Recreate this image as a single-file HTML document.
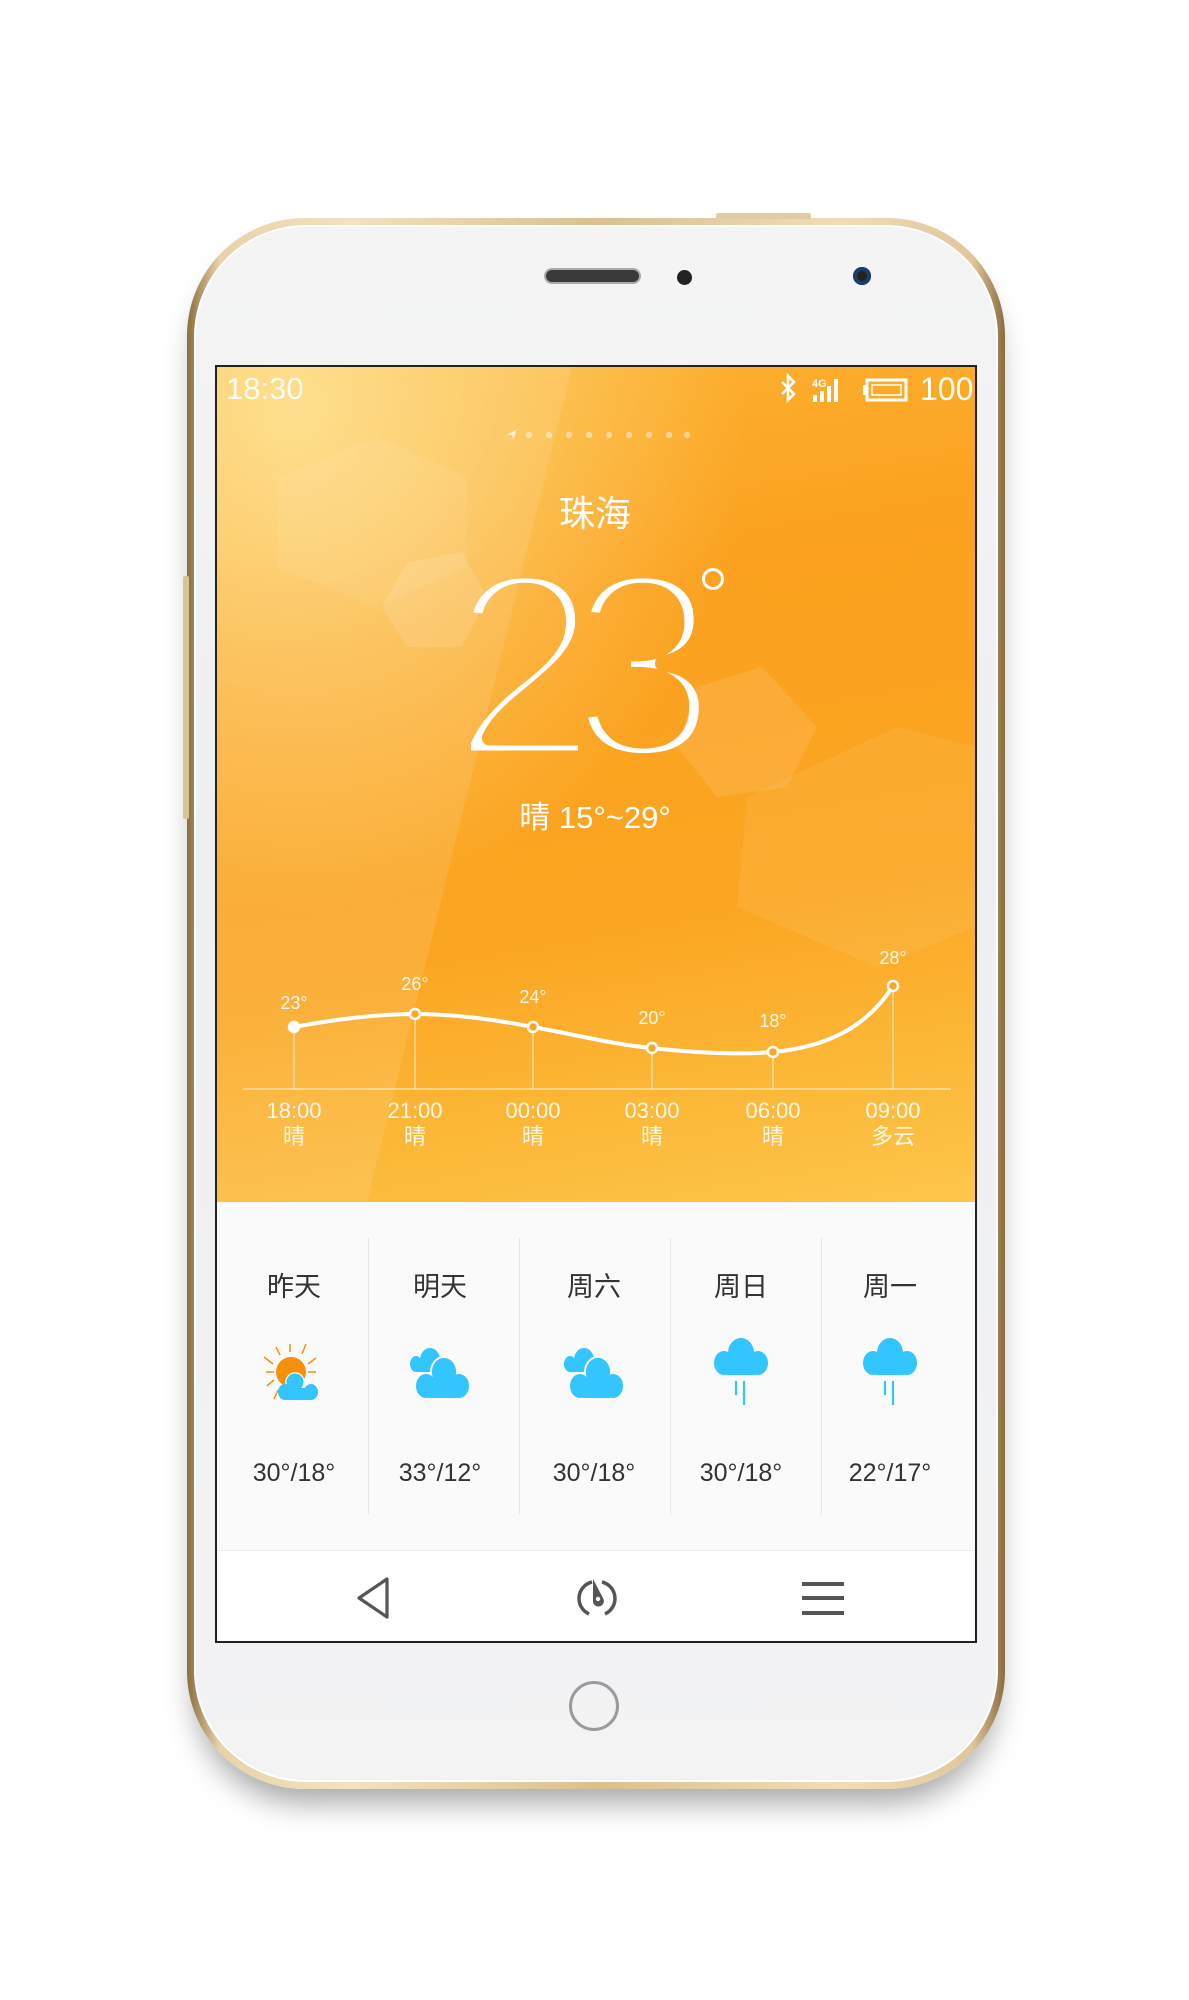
<!DOCTYPE html>
<html><head><meta charset="utf-8">
<style>
*{margin:0;padding:0;box-sizing:border-box}
body{width:1189px;height:2000px;background:#fff;position:relative;overflow:hidden;font-family:"Liberation Sans","Noto Sans CJK SC",sans-serif}
.abs{position:absolute}
.phone{left:187px;top:218px;width:818px;height:1571px;border-radius:118px;background:linear-gradient(90deg,#8a6d3e,#e8d3a8 4%,#f2e2c2 20%,#d9c08e 50%,#f0ddb8 80%,#e0c79a 96%,#8a6d3e);box-shadow:0 22px 30px -8px rgba(0,0,0,.35)}
.body{left:194px;top:225px;width:804px;height:1557px;border-radius:112px;background:linear-gradient(180deg,#f4f4f5,#eeeff1 40%,#f3f3f4);border:2px solid #fff}
.screen{left:215px;top:365px;width:762px;height:1278px;border:2px solid #222;background:#fafafa;overflow:hidden}
.orange{left:0;top:0;width:758px;height:835px;background:linear-gradient(170deg,#fcb232 0%,#fba11f 30%,#fba622 65%,#fdc64a 100%)}
.txt{color:#fff;position:absolute;white-space:nowrap}
.c{transform:translateX(-50%)}
.day{color:#333;font-size:27px}
.tmp{color:#333;font-size:25px}
.div{width:1px;background:#e6e6e6;top:871px;height:277px}
</style></head><body>
<div class="abs phone"></div>
<div class="abs body"></div>
<div class="abs" style="left:716px;top:213px;width:95px;height:6px;background:#e0cca0;border-radius:2px"></div>
<div class="abs" style="left:183px;top:576px;width:6px;height:243px;background:#d8c494;border-radius:2px"></div>
<div class="abs" style="left:544px;top:268px;width:97px;height:16px;border-radius:8px;background:#3a3a3a;border:2px solid #aaa"></div>
<div class="abs" style="left:677px;top:270px;width:15px;height:15px;border-radius:50%;background:#222"></div>
<div class="abs" style="left:853px;top:267px;width:18px;height:18px;border-radius:50%;background:#222;box-shadow:inset 0 0 0 4px #1a3d6a"></div>
<div class="abs" style="left:569px;top:1681px;width:50px;height:50px;border-radius:50%;border:3px solid #9a9a9a"></div>

<div class="abs screen">
 <div class="abs orange">
  <svg class="abs" style="left:0;top:0" width="758" height="835">
   <defs>
    <radialGradient id="g1" cx="0.1" cy="0.05" r="0.6"><stop offset="0" stop-color="#fee08a" stop-opacity=".9"/><stop offset="1" stop-color="#fee08a" stop-opacity="0"/></radialGradient>
    <mask id="m23" maskUnits="userSpaceOnUse" x="0" y="0" width="758" height="835">
     <rect width="758" height="835" fill="#000"/>
     <g font-family="Liberation Sans" font-size="268" fill="#fff" stroke="#000" stroke-width="15" stroke-linejoin="round">
      <text x="233" y="391">2</text><text x="352" y="391">3</text>
     </g>
    </mask>
   </defs>
   <rect width="758" height="835" fill="url(#g1)"/>
   <polygon points="0,0 355,0 150,835 0,835" fill="#fff" opacity=".1"/>
   <polygon points="60,110 160,70 250,110 250,200 160,240 60,200" fill="#fff" opacity=".07"/>
   <polygon points="190,195 245,185 270,230 245,280 190,280 165,240" fill="#fff" opacity=".12"/>
   <polygon points="480,320 545,300 600,360 570,420 500,430 460,380" fill="#fff" opacity=".1"/>
   <polygon points="530,430 680,360 758,380 758,560 660,600 520,540" fill="#fff" opacity=".07"/>
   <rect width="758" height="835" fill="#fff" mask="url(#m23)"/>
   <line x1="26" y1="722" x2="734" y2="722" stroke="#fff" stroke-opacity=".55" stroke-width="1.5"/>
   <g stroke="#fff" stroke-opacity=".55" stroke-width="1.5">
    <line x1="77" y1="660" x2="77" y2="722"/><line x1="198" y1="647" x2="198" y2="722"/><line x1="316" y1="660" x2="316" y2="722"/><line x1="435" y1="681" x2="435" y2="722"/><line x1="556" y1="685" x2="556" y2="722"/><line x1="676" y1="619" x2="676" y2="722"/>
   </g>
   <path d="M77 660 C120 652,160 647,198 647 C240 647,280 653,316 660 C360 668,400 678,435 681 C480 686,520 688,556 685 C610 680,650 660,676 619" fill="none" stroke="#fff" stroke-width="4"/>
   <g fill="#fba624" stroke="#fff" stroke-width="2.5">
    <circle cx="77" cy="660" r="5" fill="#fff"/><circle cx="198" cy="647" r="5"/><circle cx="316" cy="660" r="5"/><circle cx="435" cy="681" r="5"/><circle cx="556" cy="685" r="5"/><circle cx="676" cy="619" r="5"/>
   </g>
   <g fill="#fff" font-size="18" font-family="Liberation Sans" text-anchor="middle" opacity=".9">
    <text x="77" y="642">23°</text><text x="198" y="623">26°</text><text x="316" y="636">24°</text><text x="435" y="657">20°</text><text x="556" y="660">18°</text><text x="676" y="597">28°</text>
   </g>
  </svg>
  <div class="txt" style="left:9px;top:4px;font-size:31px;opacity:.92">18:30</div>
  <svg class="abs" style="left:560px;top:6px" width="140" height="36">
   <path d="M5 9 L17 21 L11 27 L11 3 L17 9 L5 21" fill="none" stroke="#fff" stroke-width="2.6"/>
   <text x="35" y="14" fill="#fff" font-size="11" font-weight="bold" font-family="Liberation Sans">4G</text>
   <g fill="#fff"><rect x="36" y="22" width="4" height="7"/><rect x="43" y="18" width="4" height="11"/><rect x="50" y="13" width="4" height="16"/><rect x="57" y="6" width="4" height="23"/></g>
   <rect x="90" y="7" width="39" height="20" fill="none" stroke="#fff" stroke-width="3"/><rect x="86" y="12" width="4" height="10" fill="#fff"/><rect x="95" y="12" width="29" height="10" fill="none" stroke="#fff" stroke-width="1.5"/>
  </svg>
  <div class="txt" style="left:703px;top:4px;font-size:32px">100</div>
  <svg class="abs" style="left:288px;top:60px" width="185" height="16">
   <path d="M2 8 L12 2 L8 13 L7 8Z" fill="#fff" opacity=".7"/>
   <g fill="#fff" opacity=".45"><circle cx="24" cy="8" r="3.2"/><circle cx="44" cy="8" r="3.2"/><circle cx="64" cy="8" r="3.2"/><circle cx="84" cy="8" r="3.2"/><circle cx="104" cy="8" r="3.2"/><circle cx="124" cy="8" r="3.2"/><circle cx="144" cy="8" r="3.2"/><circle cx="164" cy="8" r="3.2"/><circle cx="182" cy="8" r="3.2"/></g>
  </svg>
  <div class="txt c" style="left:378px;top:118px;font-size:36px">珠海</div>
  <div class="abs" style="left:485px;top:201px;width:22px;height:22px;border-radius:50%;border:3px solid #fff"></div>
  <div class="txt c" style="left:378px;top:425px;font-size:31px">晴 15°~29°</div>
  <div class="txt c" style="left:77px;top:731px;font-size:22px;text-align:center;line-height:26px;opacity:.9">18:00<br>晴</div>
  <div class="txt c" style="left:198px;top:731px;font-size:22px;text-align:center;line-height:26px;opacity:.9">21:00<br>晴</div>
  <div class="txt c" style="left:316px;top:731px;font-size:22px;text-align:center;line-height:26px;opacity:.9">00:00<br>晴</div>
  <div class="txt c" style="left:435px;top:731px;font-size:22px;text-align:center;line-height:26px;opacity:.9">03:00<br>晴</div>
  <div class="txt c" style="left:556px;top:731px;font-size:22px;text-align:center;line-height:26px;opacity:.9">06:00<br>晴</div>
  <div class="txt c" style="left:676px;top:731px;font-size:22px;text-align:center;line-height:26px;opacity:.9">09:00<br>多云</div>
 </div>
 <div class="abs div" style="left:151px"></div>
 <div class="abs div" style="left:302px"></div>
 <div class="abs div" style="left:453px"></div>
 <div class="abs div" style="left:604px"></div>
 <div class="txt c day" style="left:77px;top:898px">昨天</div>
 <div class="txt c day" style="left:223px;top:898px">明天</div>
 <div class="txt c day" style="left:377px;top:898px">周六</div>
 <div class="txt c day" style="left:524px;top:898px">周日</div>
 <div class="txt c day" style="left:673px;top:898px">周一</div>
 <svg class="abs" style="left:45px;top:975px" width="64" height="64">
  <g stroke="#f5900a" stroke-width="1.5"><line x1="28" y1="2" x2="28" y2="10"/><line x1="14" y1="5" x2="18" y2="13"/><line x1="44" y1="2" x2="40" y2="12"/><line x1="2" y1="15" x2="11" y2="22"/><line x1="54" y1="16" x2="46" y2="22"/><line x1="4" y1="30" x2="12" y2="30"/><line x1="46" y1="30" x2="54" y2="30"/><line x1="5" y1="44" x2="12" y2="38"/><line x1="12" y1="57" x2="16" y2="48"/></g>
  <circle cx="29" cy="30" r="15" fill="#f5900a"/>
  <g fill="#33c5fd" stroke="#fafafa" stroke-width="1.5"><circle cx="33" cy="40" r="9"/></g>
  <g fill="#33c5fd"><ellipse cx="23" cy="50" rx="7" ry="8"/><ellipse cx="49" cy="50" rx="7" ry="8"/><circle cx="33" cy="40" r="8.5"/><rect x="22" y="46" width="28" height="12" rx="2"/></g>
 </svg>
 <svg class="abs" style="left:191px;top:975px" width="64" height="64">
  <g fill="#33c5fd"><ellipse cx="8" cy="22" rx="6" ry="8"/><ellipse cx="22" cy="18" rx="10" ry="12"/><rect x="8" y="22" width="16" height="8"/></g>
  <g fill="#33c5fd" stroke="#fafafa" stroke-width="2"><ellipse cx="36" cy="30" rx="13" ry="15"/></g>
  <g fill="#33c5fd"><ellipse cx="18" cy="44" rx="10" ry="12"/><ellipse cx="51" cy="44" rx="10" ry="12"/><ellipse cx="36" cy="30" rx="12" ry="14"/><rect x="18" y="40" width="33" height="16" rx="4"/></g>
 </svg>
 <svg class="abs" style="left:345px;top:975px" width="64" height="64">
  <g fill="#33c5fd"><ellipse cx="8" cy="22" rx="6" ry="8"/><ellipse cx="22" cy="18" rx="10" ry="12"/><rect x="8" y="22" width="16" height="8"/></g>
  <g fill="#33c5fd" stroke="#fafafa" stroke-width="2"><ellipse cx="36" cy="30" rx="13" ry="15"/></g>
  <g fill="#33c5fd"><ellipse cx="18" cy="44" rx="10" ry="12"/><ellipse cx="51" cy="44" rx="10" ry="12"/><ellipse cx="36" cy="30" rx="12" ry="14"/><rect x="18" y="40" width="33" height="16" rx="4"/></g>
 </svg>
 <svg class="abs" style="left:493px;top:968px" width="64" height="80">
  <g fill="#33c5fd"><ellipse cx="14" cy="28" rx="10" ry="12"/><ellipse cx="48" cy="28" rx="10" ry="12"/><ellipse cx="31" cy="18" rx="13" ry="15"/><rect x="14" y="22" width="34" height="18" rx="4"/></g>
  <g stroke="#33c5fd" stroke-width="2.2"><line x1="26" y1="46" x2="26" y2="60"/><line x1="34" y1="46" x2="34" y2="70"/></g>
 </svg>
 <svg class="abs" style="left:642px;top:968px" width="64" height="80">
  <g fill="#33c5fd"><ellipse cx="14" cy="28" rx="10" ry="12"/><ellipse cx="48" cy="28" rx="10" ry="12"/><ellipse cx="31" cy="18" rx="13" ry="15"/><rect x="14" y="22" width="34" height="18" rx="4"/></g>
  <g stroke="#33c5fd" stroke-width="2.2"><line x1="26" y1="46" x2="26" y2="60"/><line x1="34" y1="46" x2="34" y2="70"/></g>
 </svg>
 <div class="txt c tmp" style="left:77px;top:1092px">30°/18°</div>
 <div class="txt c tmp" style="left:223px;top:1092px">33°/12°</div>
 <div class="txt c tmp" style="left:377px;top:1092px">30°/18°</div>
 <div class="txt c tmp" style="left:524px;top:1092px">30°/18°</div>
 <div class="txt c tmp" style="left:673px;top:1092px">22°/17°</div>
 <div class="abs" style="left:0;top:1183px;width:758px;height:95px;background:#fff;border-top:1.5px solid #ececec"></div>
 <svg class="abs" style="left:138px;top:1209px" width="40" height="44"><path d="M32 3 L32 41 L4 22 Z" fill="none" stroke="#555" stroke-width="3.2" stroke-linejoin="round"/></svg>
 <svg class="abs" style="left:358px;top:1209px" width="44" height="44">
  <path d="M14 38 A17 17 0 0 1 17 6" fill="none" stroke="#555" stroke-width="3.5"/>
  <path d="M30 38 A17 17 0 0 0 27 6" fill="none" stroke="#555" stroke-width="3.5"/>
  <path d="M18 3 L28 22 A5.5 5.5 0 1 1 18 24 Z" fill="#555"/><circle cx="23" cy="23" r="2.2" fill="#fff"/>
 </svg>
 <div class="abs" style="left:585px;top:1215px;width:42px;height:3.5px;background:#555"></div>
 <div class="abs" style="left:585px;top:1229px;width:42px;height:3.5px;background:#555"></div>
 <div class="abs" style="left:585px;top:1244px;width:42px;height:3.5px;background:#555"></div>
</div>
</body></html>
